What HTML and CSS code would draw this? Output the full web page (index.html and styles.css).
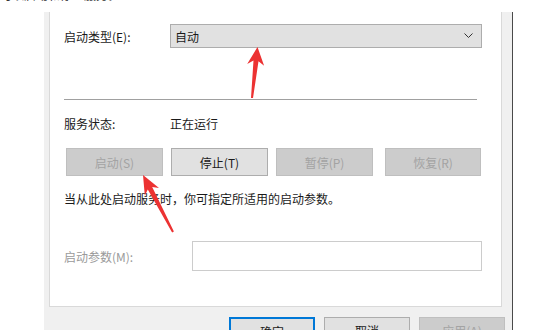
FILE: index.html
```html
<!DOCTYPE html>
<html>

<head>
    <meta charset="utf-8">
    <title>服务属性</title>
    <link rel="stylesheet" href="styles.css">
</head>

<body>

    <div class="top_cut"><span>可以启动和停止服务。</span></div>

    <div class="dialog">
        <div class="panel">

            <div class="row type_row">
                <div class="label">启动类型(E):</div>
                <div class="combo">
                    <span>自动</span>
                    <svg class="chevron" width="9" height="6" viewBox="0 0 9 6">
                        <polyline points="0.5,0.5 4.5,4.5 8.5,0.5" fill="none" stroke="#333" stroke-width="1"/>
                    </svg>
                </div>
            </div>

            <div class="separator"></div>

            <div class="row status_row">
                <div class="label">服务状态:</div>
                <div>正在运行</div>
            </div>

            <div class="buttons">
                <button class="btn disabled">启动(S)</button>
                <button class="btn">停止(T)</button>
                <button class="btn disabled">暂停(P)</button>
                <button class="btn disabled wide">恢复(R)</button>
            </div>

            <div class="hint">当从此处启动服务时，你可指定所适用的启动参数。</div>

            <div class="row param_row">
                <div class="label grey">启动参数(M):</div>
                <div class="param_input"></div>
            </div>

        </div>

        <div class="footer">
            <button class="btn small default">确定</button>
            <button class="btn small">取消</button>
            <button class="btn small disabled">应用(A)</button>
        </div>
    </div>

    <!-- the two red annotation arrows lie over the dialog -->
    <svg class="arrows" width="537" height="330" viewBox="0 0 537 330">
        <polygon fill="#ec3232"
            points="257.5,47 264.1,65.8 258.5,61.2 253,98.1 251,97.9 253.5,60.6 247.2,64"/>
        <polygon fill="#ec3232"
            points="143,175 159,188.1 152.2,187.1 173.9,231.5 172.1,232.5 147.8,189.5 144.8,195.5"/>
    </svg>

</body>

</html>
```

FILE: styles.css
```css
html, body {
    height: 330px;
    overflow: hidden;
}

body {
    margin: 0;
    position: relative;
    background: #ffffff;
    color: #1a1a1a;
    font-family: "Noto Sans CJK SC", "Noto Sans", sans-serif;
    font-size: 12px;
}

.top_cut {
    height: 12px;
    overflow: hidden;
    white-space: nowrap;
}

.top_cut span {
    display: block;
    margin-top: -13px;
    line-height: 16px;
    color: #333;
}

.dialog {
    margin-left: 44px;
    width: 468px;
    height: 318px;
    background: #f0f0f0;
    border-right: 1px solid #4a4a4a;
}

.panel {
    box-sizing: border-box;
    margin: 0 10px 0 5px;
    height: 295px;
    padding: 12px 0 0 14px;
    background: #ffffff;
    border: 1px solid #d9d9d9;
    border-top: none;
}

.row {
    display: flex;
    align-items: center;
}

.label {
    width: 106px;
}

.grey {
    color: #9a9a9a;
}

.combo {
    box-sizing: border-box;
    width: 312px;
    height: 24px;
    display: flex;
    align-items: center;
    justify-content: space-between;
    padding: 0 8px 0 4px;
    background: #e1e1e1;
    border: 1px solid #adadad;
}

.chevron {
    display: block;
}

.separator {
    margin-top: 51px;
    width: 413px;
    border-top: 1px solid #a0a0a0;
}

.status_row {
    margin-top: 14px;
    line-height: 20px;
}

.buttons {
    display: flex;
    margin-top: 14px;
    margin-left: 2px;
    gap: 8px;
}

.btn {
    box-sizing: border-box;
    width: 97px;
    height: 28px;
    padding: 0;
    font-family: "Noto Sans CJK SC", "Noto Sans", sans-serif;
    font-size: 12px;
    color: #1a1a1a;
    background: #e1e1e1;
    border: 1px solid #adadad;
}

.btn.disabled {
    color: #a3a3a3;
    background: #cccccc;
    border-color: #bfbfbf;
}

.btn.wide {
    margin-left: 4px;
    width: 96px;
}

.hint {
    margin-top: 13px;
    line-height: 20px;
}

.param_row {
    margin-top: 32px;
}

.param_row .label {
    width: 128px;
}

.param_input {
    box-sizing: border-box;
    width: 290px;
    height: 30px;
    background: #ffffff;
    border: 1px solid #cccccc;
}

.footer {
    display: flex;
    justify-content: flex-end;
    gap: 9px;
    padding: 10px 7px 0 0;
}

.btn.small {
    width: 86px;
    height: 24px;
    padding-top: 3px;
    line-height: 20px;
    vertical-align: top;
}

.btn.default {
    border: 2px solid #0078d7;
}

.arrows {
    position: absolute;
    top: 0;
    left: 0;
    pointer-events: none;
}
```
